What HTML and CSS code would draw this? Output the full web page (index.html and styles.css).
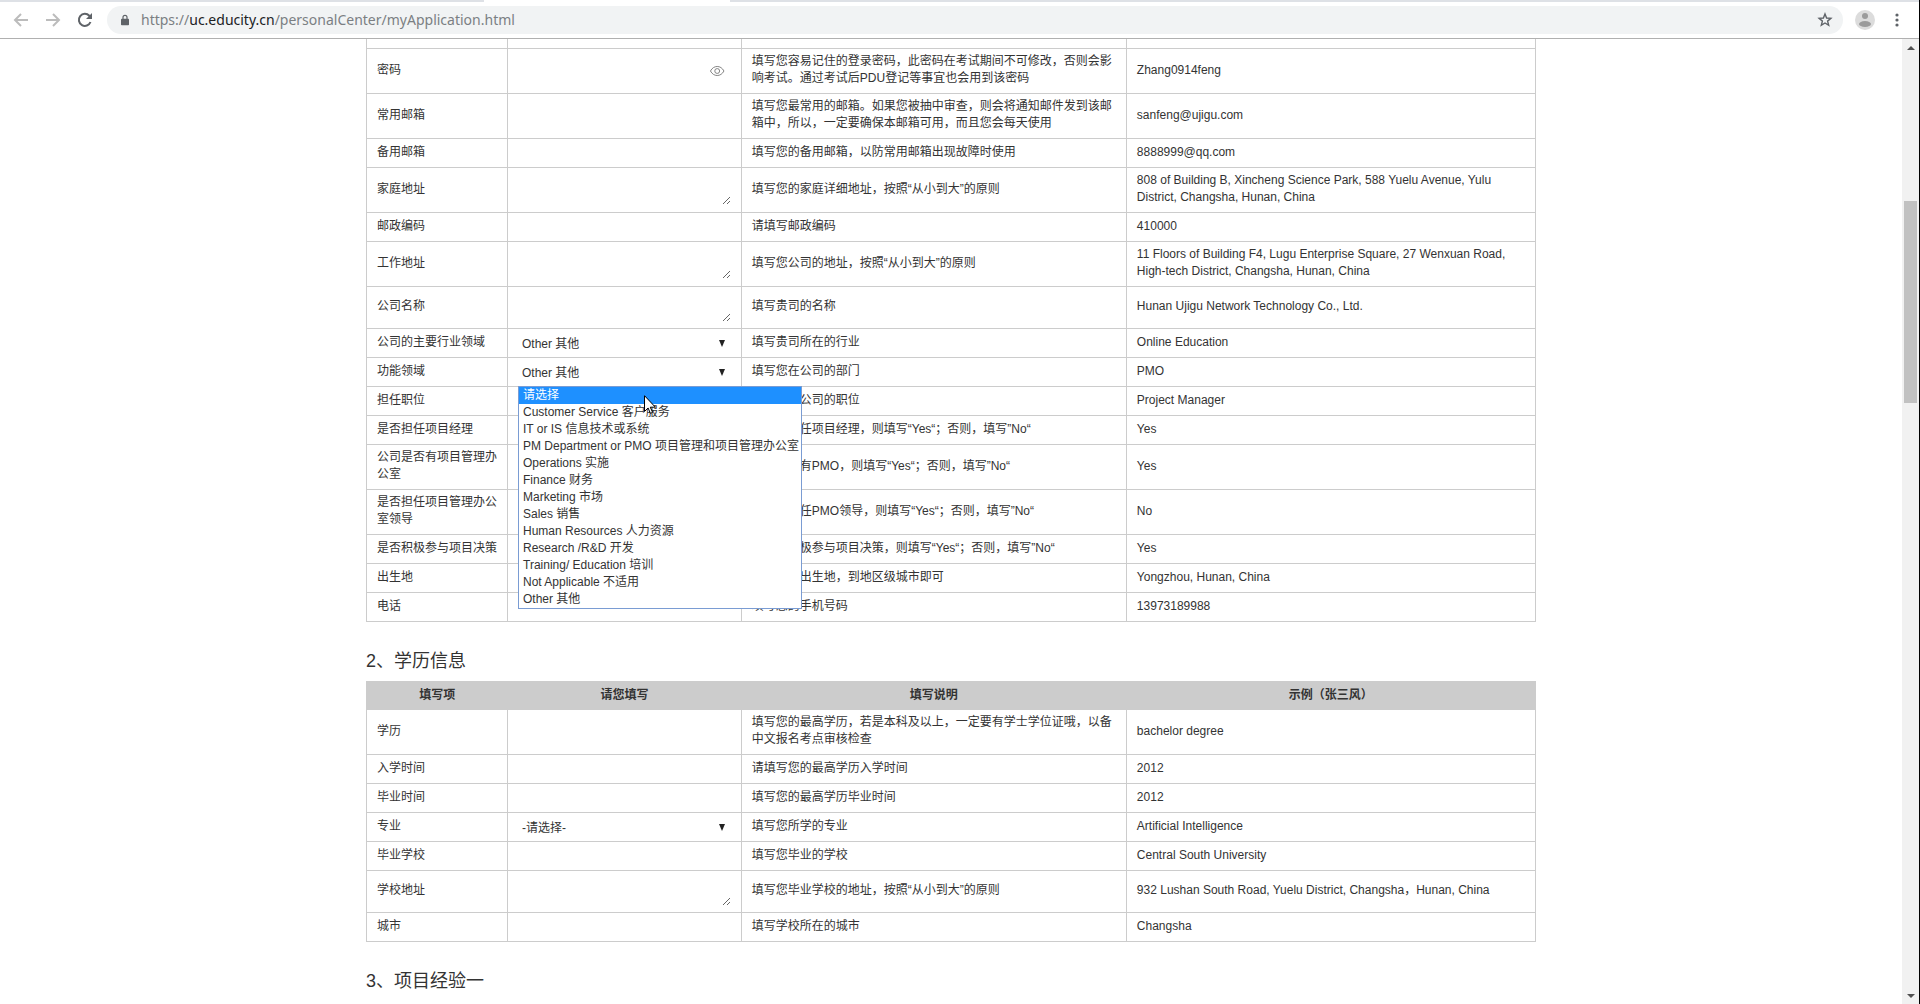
FILE: index.html
```html
<!DOCTYPE html>
<html lang="zh-CN">
<head>
<meta charset="utf-8">
<title>我的报名</title>
<link rel="stylesheet" href="styles.css">
</head>
<body>
<div class="browser">
  <div class="tab-strip"><div class="tab-active"></div></div>
  <header class="toolbar">
    <nav class="nav-buttons">
      <button class="icon-button" type="button" aria-label="后退"><svg class="nav-icon nav-off" viewBox="0 0 16 16"><path d="M15 8H2M8 2L2 8l6 6"/></svg></button>
      <button class="icon-button" type="button" aria-label="前进"><svg class="nav-icon nav-off" viewBox="0 0 16 16"><path d="M1 8h13M8 2l6 6-6 6"/></svg></button>
      <button class="icon-button" type="button" aria-label="刷新"><svg class="nav-icon" viewBox="0 0 16 16"><path d="M13.500 10A6 6 0 1 1 12.300 3.800L14 5.500"/><path class="fill" d="M15 1v6H9z"/></svg></button>
    </nav>
    <div class="omnibox">
      <svg class="lock" viewBox="0 0 10 13"><path d="M1 5h8a1 1 0 0 1 1 1v6a1 1 0 0 1-1 1H1a1 1 0 0 1-1-1V6a1 1 0 0 1 1-1z"/><path class="shackle" d="M2.500 6V3.200a2.500 2.500 0 0 1 5 0V6"/></svg>
      <span class="url">https://<b>uc.educity.cn</b>/personalCenter/myApplication.html</span>
      <button class="icon-button star" type="button" aria-label="收藏"><svg viewBox="0 0 16 16"><path d="M8 2l1.600 4 4.300.300-3.300 2.800 1.100 4.200L8 11l-3.700 2.300 1.100-4.200-3.300-2.800L6.400 6z"/></svg></button>
    </div>
    <button class="icon-button avatar" type="button" aria-label="用户"><svg viewBox="0 0 20 20"><circle cx="10" cy="10" r="10" fill="#dcdcdc"/><circle cx="10" cy="6" r="3" fill="#9b9b9b"/><ellipse cx="10" cy="14" rx="6" ry="3" fill="#9b9b9b"/></svg></button>
    <button class="icon-button menu" type="button" aria-label="菜单"><svg viewBox="0 0 4 14"><circle cx="2" cy="2" r="1.600"/><circle cx="2" cy="7" r="1.600"/><circle cx="2" cy="12" r="1.600"/></svg></button>
  </header>

  <div class="viewport">
    <main class="page">
      <div class="container">
        <table class="form-table form-personal">
          <colgroup><col class="col-item"><col class="col-input"><col class="col-note"><col class="col-sample"></colgroup>
          <tbody>
            <tr><td></td><td></td><td></td><td></td></tr>
            <tr><td><label for="pwd">密码</label></td><td><div class="field field-password"><input id="pwd" type="password"><svg class="eye" viewBox="0 0 16 12"><path d="M.500 6C4-.700 12-.700 15.500 6 12 12.700 4 12.700.500 6z"/><circle cx="8" cy="6" r="2.700"/></svg></div></td><td>填写您容易记住的登录密码，此密码在考试期间不可修改，否则会影响考试。通过考试后PDU登记等事宜也会用到该密码</td><td>Zhang0914feng</td></tr>
            <tr><td><label for="mail">常用邮箱</label></td><td><div class="field"><input id="mail" type="text"></div></td><td>填写您最常用的邮箱。如果您被抽中审查，则会将通知邮件发到该邮箱中，所以，一定要确保本邮箱可用，而且您会每天使用</td><td>sanfeng@ujigu.com</td></tr>
            <tr><td><label for="mail2">备用邮箱</label></td><td><div class="field"><input id="mail2" type="text"></div></td><td>填写您的备用邮箱，以防常用邮箱出现故障时使用</td><td>8888999@qq.com</td></tr>
            <tr><td><label for="home">家庭地址</label></td><td><div class="field"><textarea id="home"></textarea></div></td><td>填写您的家庭详细地址，按照“从小到大”的原则</td><td>808 of Building B, Xincheng Science Park, 588 Yuelu Avenue, Yulu District, Changsha, Hunan, China</td></tr>
            <tr><td><label for="zip">邮政编码</label></td><td><div class="field"><input id="zip" type="text"></div></td><td>请填写邮政编码</td><td>410000</td></tr>
            <tr><td><label for="work">工作地址</label></td><td><div class="field"><textarea id="work"></textarea></div></td><td>填写您公司的地址，按照“从小到大”的原则</td><td>11 Floors of Building F4, Lugu Enterprise Square, 27 Wenxuan Road, High-tech District, Changsha, Hunan, China</td></tr>
            <tr><td><label for="company">公司名称</label></td><td><div class="field"><textarea id="company"></textarea></div></td><td>填写贵司的名称</td><td>Hunan Ujigu Network Technology Co., Ltd.</td></tr>
            <tr><td><label for="industry">公司的主要行业领域</label></td><td><div class="field field-select"><select id="industry"><option>Other 其他</option></select></div></td><td>填写贵司所在的行业</td><td>Online Education</td></tr>
            <tr><td><label for="function">功能领域</label></td><td><div class="field field-select"><select id="function"><option>Other 其他</option></select>
              <ul class="options" role="listbox" aria-label="功能领域">
                <li class="option option-active" role="option">请选择</li>
                <li class="option" role="option">Customer Service 客户服务</li>
                <li class="option" role="option">IT or IS 信息技术或系统</li>
                <li class="option" role="option">PM Department or PMO 项目管理和项目管理办公室</li>
                <li class="option" role="option">Operations 实施</li>
                <li class="option" role="option">Finance 财务</li>
                <li class="option" role="option">Marketing 市场</li>
                <li class="option" role="option">Sales 销售</li>
                <li class="option" role="option">Human Resources 人力资源</li>
                <li class="option" role="option">Research /R&amp;D 开发</li>
                <li class="option" role="option">Training/ Education 培训</li>
                <li class="option" role="option">Not Applicable 不适用</li>
                <li class="option" role="option">Other 其他</li>
              </ul>
              <svg class="cursor" viewBox="0 0 12 19"><path d="M.500.700v15.800l3.600-3.500 2.300 5.300 2.200-.9-2.300-5.200h5.100z"/></svg></div></td><td>填写您在公司的部门</td><td>PMO</td></tr>
            <tr><td><label for="post">担任职位</label></td><td><div class="field"><input id="post" type="text"></div></td><td>填写您在公司的职位</td><td>Project Manager</td></tr>
            <tr><td><label for="pm">是否担任项目经理</label></td><td><div class="field"><input id="pm" type="text"></div></td><td>如果您担任项目经理，则填写“Yes“；否则，填写”No“</td><td>Yes</td></tr>
            <tr><td><label for="pmo">公司是否有项目管理办公室</label></td><td><div class="field"><input id="pmo" type="text"></div></td><td>如果贵司有PMO，则填写“Yes“；否则，填写”No“</td><td>Yes</td></tr>
            <tr><td><label for="lead">是否担任项目管理办公室领导</label></td><td><div class="field"><input id="lead" type="text"></div></td><td>如果您担任PMO领导，则填写“Yes“；否则，填写”No“</td><td>No</td></tr>
            <tr><td><label for="decide">是否积极参与项目决策</label></td><td><div class="field"><input id="decide" type="text"></div></td><td>如果您积极参与项目决策，则填写“Yes“；否则，填写”No“</td><td>Yes</td></tr>
            <tr><td><label for="birth">出生地</label></td><td><div class="field"><input id="birth" type="text"></div></td><td>填写您的出生地，到地区级城市即可</td><td>Yongzhou, Hunan, China</td></tr>
            <tr><td><label for="phone">电话</label></td><td><div class="field"><input id="phone" type="text"></div></td><td>填写您的手机号码</td><td>13973189988</td></tr>
          </tbody>
        </table>

        <h2 class="section-title">2、学历信息</h2>
        <table class="form-table">
          <colgroup><col class="col-item"><col class="col-input"><col class="col-note"><col class="col-sample"></colgroup>
          <thead><tr><th>填写项</th><th>请您填写</th><th>填写说明</th><th>示例（张三风）</th></tr></thead>
          <tbody>
            <tr><td><label for="degree">学历</label></td><td><div class="field"><input id="degree" type="text"></div></td><td>填写您的最高学历，若是本科及以上，一定要有学士学位证哦，以备中文报名考点审核检查</td><td>bachelor degree</td></tr>
            <tr><td><label for="enter">入学时间</label></td><td><div class="field"><input id="enter" type="text"></div></td><td>请填写您的最高学历入学时间</td><td>2012</td></tr>
            <tr><td><label for="leave">毕业时间</label></td><td><div class="field"><input id="leave" type="text"></div></td><td>填写您的最高学历毕业时间</td><td>2012</td></tr>
            <tr><td><label for="major">专业</label></td><td><div class="field field-select"><select id="major"><option>-请选择-</option></select></div></td><td>填写您所学的专业</td><td>Artificial Intelligence</td></tr>
            <tr><td><label for="school">毕业学校</label></td><td><div class="field"><input id="school" type="text"></div></td><td>填写您毕业的学校</td><td>Central South University</td></tr>
            <tr><td><label for="schooladdr">学校地址</label></td><td><div class="field"><textarea id="schooladdr"></textarea></div></td><td>填写您毕业学校的地址，按照“从小到大”的原则</td><td>932 Lushan South Road, Yuelu District, Changsha，Hunan, China</td></tr>
            <tr><td><label for="city">城市</label></td><td><div class="field"><input id="city" type="text"></div></td><td>填写学校所在的城市</td><td>Changsha</td></tr>
          </tbody>
        </table>

        <h2 class="section-title">3、项目经验一</h2>
      </div>
    </main>
    <div class="scrollbar">
      <div class="scroll-arrow"></div>
      <div class="scroll-track"><div class="scroll-thumb"></div></div>
      <div class="scroll-arrow scroll-arrow-down"></div>
    </div>
  </div>
</div>
</body>
</html>
```
FILE: styles.css
```css
* { box-sizing: border-box; }

body {
  margin: 0;
  background: #fff;
  color: #333;
  font: 12px/17px "Liberation Sans", Arial, "Noto Sans CJK SC", sans-serif;
}

.browser {
  display: flex;
  flex-direction: column;
  height: 100vh;
  overflow: hidden;
  border-right: 1px solid #000;
}

/* browser chrome */
.tab-strip { flex: none; height: 2px; padding-left: 484px; background: #dee1e6; }
.tab-active { width: 246px; height: 2px; background: #fff; }

.toolbar {
  flex: none;
  display: flex;
  align-items: center;
  height: 37px;
  padding: 0 20px 0 13px;
  border-bottom: 1px solid #b0b0b0;
}

.nav-buttons { display: flex; gap: 16px; width: 94px; }

.icon-button {
  display: block;
  padding: 0;
  border: 0;
  background: none;
}
.icon-button svg { display: block; }

.nav-icon { width: 16px; height: 16px; fill: none; stroke: #5f6368; stroke-width: 2; }
.nav-off { stroke: #bcbcbc; }
.nav-icon .fill { fill: #5f6368; stroke: none; }

.omnibox {
  flex: 1;
  display: flex;
  align-items: center;
  height: 28px;
  padding: 0 10px 0 14px;
  border-radius: 14px;
  background: #f1f3f4;
}
.lock { width: 8px; height: 12px; fill: #5f6368; }
.shackle { fill: none; stroke: #5f6368; stroke-width: 1.500; }
.url {
  flex: 1;
  margin-left: 12px;
  color: #7b7f83;
  font: 14px/20px "Noto Sans", sans-serif;
}
.url b { color: #202124; font-weight: normal; }
.star svg { width: 16px; height: 16px; fill: none; stroke: #5f6368; stroke-width: 1.400; }
.avatar { margin-left: 12px; }
.avatar svg { width: 20px; height: 20px; }
.menu { margin-left: 20px; }
.menu svg { width: 4px; height: 14px; fill: #5f6368; }

/* page area */
.viewport { flex: 1; display: flex; min-height: 0; }
.page { flex: 1; min-width: 0; overflow: hidden; }
.container { max-width: 1170px; margin: 0 auto; }

.form-table {
  width: 100%;
  table-layout: fixed;
  border-collapse: collapse;
}
.form-personal { margin-top: -20px; }
.col-item { width: 141px; }
.col-input { width: 20%; }
.col-sample { width: 35%; }

.form-table td {
  height: 29px;
  padding: 4px 10px 6px;
  border: 1px solid #ccc;
  vertical-align: middle;
}
.form-table td:first-child { padding-right: 9px; }
.form-table th {
  height: 28px;
  padding: 0 10px;
  background: #ccc;
  text-align: center;
}
.form-table thead { border: 1px solid #ccc; }

.field { position: relative; display: flex; }
.field input,
.field textarea,
.field select {
  display: block;
  width: 100%;
  padding: 0 4px;
  border: 0;
  outline: 0;
  background: none;
  color: inherit;
  font: inherit;
}
.field input { height: 17px; }
.field textarea { height: 31px; resize: vertical; }
.field select { height: 17px; appearance: none; }

.field-select { top: 2px; }
.field-select::after {
  content: "";
  position: absolute;
  top: 4px;
  right: 6px;
  border: 3px solid transparent;
  border-top: 7px solid #222;
  border-bottom: 0;
}

.field-password { align-items: center; }
.eye {
  width: 16px;
  height: 12px;
  margin: 2px 6px 0 0;
  fill: none;
  stroke: #777;
}

.options {
  position: absolute;
  z-index: 2;
  top: 21px;
  left: 0;
  margin: 0;
  padding: 0;
  border: 1px solid #7a9cd3;
  background: #fff;
  list-style: none;
}
.option { padding: 0 2px 0 4px; white-space: nowrap; }
.option-active { background: #1e90ff; color: #fff; }

.cursor {
  position: absolute;
  z-index: 3;
  top: 30px;
  left: 126px;
  width: 12px;
  height: 19px;
  fill: #fff;
  stroke: #000;
}

.section-title {
  margin: 25px 0 6px;
  font-size: 18px;
  font-weight: normal;
  line-height: 28px;
}

/* scrollbar */
.scrollbar {
  flex: none;
  display: flex;
  flex-direction: column;
  width: 17px;
  background: #f1f1f1;
}
.scroll-arrow { height: 17px; padding: 7px 5px; }
.scroll-arrow::before {
  content: "";
  display: block;
  width: 0;
  border: 4px solid transparent;
  border-top: 0;
  border-bottom-color: #505050;
}
.scroll-arrow-down::before {
  border-top: 4px solid #505050;
  border-bottom: 0;
}
.scroll-track { flex: 1; padding-top: 145px; }
.scroll-thumb { width: 13px; height: 202px; margin: 0 auto; background: #c1c1c1; }
```
